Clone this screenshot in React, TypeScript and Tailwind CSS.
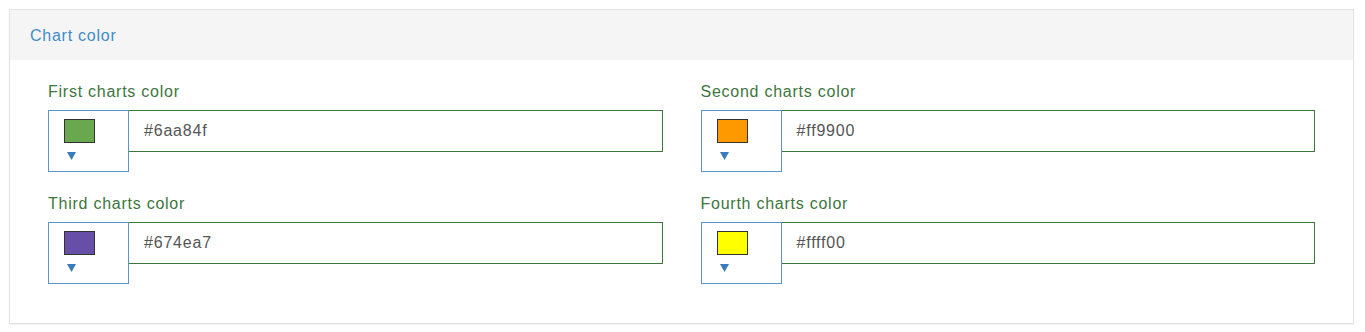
import React from "react";

const items = [
  { label: "First charts color", value: "#6aa84f" },
  { label: "Second charts color", value: "#ff9900" },
  { label: "Third charts color", value: "#674ea7" },
  { label: "Fourth charts color", value: "#ffff00" },
];

function Picker({ label, value }: { label: string; value: string }) {
  return (
    <div className="flex flex-col">
      <div className="h-[20px] text-[16px] leading-[20px] tracking-[0.75px] text-[#3c763d]">{label}</div>
      <div className="mt-[8px] flex items-start">
        <div className="relative h-[62px] w-[81px] shrink-0 border border-[#5b94c8] bg-white">
          <div
            className="absolute left-[15px] top-[8px] h-[24px] w-[31px] border border-[#333]"
            style={{ backgroundColor: value }}
          />
          <svg className="absolute left-[18px] top-[41px]" width="9" height="8" viewBox="0 0 9 8">
            <path d="M0 0 H9 L4.5 8 Z" fill="#3a7bb8" />
          </svg>
        </div>
        <div className="flex h-[42px] flex-1 items-center border border-l-0 border-[#3c763d] bg-white pl-[15px] text-[16px] tracking-[0.8px] text-[#555]">
          {value}
        </div>
      </div>
    </div>
  );
}

export default function App() {
  return (
    <div className="min-h-[332px] bg-white pl-[9px] pt-[9px] font-[Liberation_Sans,Arial,sans-serif]">
      <div className="w-[1345px] border border-[#e3e3e3] bg-white shadow-[0_1px_1px_rgba(0,0,0,0.05)]">
        <div className="flex h-[50px] items-center bg-[#f5f5f5] pl-[20px] pt-[1px] text-[16px] tracking-[0.75px] text-[#428bca]">
          Chart color
        </div>
        <div className="grid grid-cols-2 gap-x-[38px] gap-y-[22px] px-[38px] pb-[39px] pt-[22px]">
          {items.map((it) => (
            <Picker key={it.label} label={it.label} value={it.value} />
          ))}
        </div>
      </div>
    </div>
  );
}
